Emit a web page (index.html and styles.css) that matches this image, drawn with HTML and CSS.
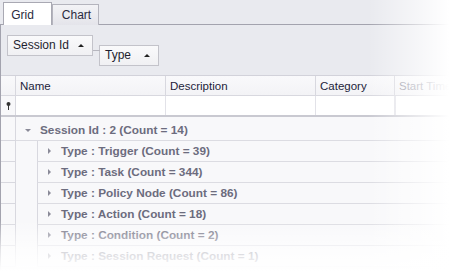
FILE: index.html
```html
<!DOCTYPE html>
<html>
<head>
<meta charset="utf-8">
<link rel="stylesheet" href="styles.css">
</head>
<body>
<div class="app">
  <div class="tabs">
    <div class="tab active">Grid</div>
    <div class="tab">Chart</div>
  </div>
  <div class="panel">
    <div class="group-panel">
      <div class="gbox gbox-session">Session Id <span class="sort"></span></div>
      <div class="gbox gbox-type">Type <span class="sort"></span></div>
    </div>
    <div class="grid">
      <div class="hrow">
        <div class="ind"></div>
        <div class="hcell c-name">Name</div>
        <div class="hcell c-desc">Description</div>
        <div class="hcell c-cat">Category</div>
        <div class="hcell c-start">Start Time</div>
      </div>
      <div class="frow">
        <div class="ind">
          <svg width="5" height="8" viewBox="0 0 5 8"><circle cx="2.5" cy="2" r="2" fill="#333"/><rect x="2" y="3" width="1" height="5" fill="#333"/></svg>
        </div>
        <div class="fcell c-name"></div>
        <div class="fcell c-desc"></div>
        <div class="fcell c-cat"></div>
        <div class="fcell c-start"></div>
      </div>
      <div class="groups">
        <div class="ind-col">
          <div class="ind-cell"></div><div class="ind-cell"></div><div class="ind-cell"></div><div class="ind-cell"></div><div class="ind-cell"></div><div class="ind-cell"></div><div class="ind-cell"></div>
        </div>
        <div class="gcontent">
          <div class="grow session"><span class="arrow-down"></span>Session Id : 2 (Count = 14)</div>
          <div class="children">
            <div class="grow"><span class="arrow-right"></span>Type : Trigger (Count = 39)</div>
            <div class="grow"><span class="arrow-right"></span>Type : Task (Count = 344)</div>
            <div class="grow"><span class="arrow-right"></span>Type : Policy Node (Count = 86)</div>
            <div class="grow"><span class="arrow-right"></span>Type : Action (Count = 18)</div>
            <div class="grow"><span class="arrow-right"></span>Type : Condition (Count = 2)</div>
            <div class="grow"><span class="arrow-right"></span>Type : Session Request (Count = 1)</div>
          </div>
        </div>
      </div>
    </div>
  </div>
  <div class="fade"></div>
</div>
</body>
</html>
```

FILE: styles.css
```css
* { box-sizing: border-box; }
html, body { margin: 0; padding: 0; background: #fff; }
.app {
  position: relative;
  width: 449px;
  height: 271px;
  overflow: hidden;
  font-family: "Liberation Sans", Arial, sans-serif;
  font-size: 11px;
}
.tabs {
  display: flex;
  align-items: flex-start;
  height: 25px;
  padding-left: 3px;
  background: #e9eaef;
  border-bottom: 1px solid #a3a3ae;
}
.tab {
  margin-top: 4px;
  height: 21px;
  width: 47px;
  padding-top: 3px;
  text-align: center;
  color: #2a2a3e;
  font-size: 12px;
  background: linear-gradient(#f3f3f6, #e4e4ea);
  border: 1px solid #b4b4bd;
  border-bottom: none;
  padding-left: 2px;
}
.tab.active {
  margin-top: 2px;
  height: 23px;
  width: 49px;
  padding-top: 5px;
  background: #fff;
  border-color: #a9a9b3;
  position: relative;
  z-index: 1;
  margin-bottom: -1px;
  padding-right: 12px;
}
.panel {
  background: #e9eaef;
  border-left: 1px solid #a3a3ae;
  height: 246px;
}
.group-panel {
  position: relative;
  height: 50px;
  display: flex;
  align-items: flex-start;
  padding-left: 6px;
  padding-top: 10px;
}
.gbox {
  display: flex;
  align-items: center;
  justify-content: space-between;
  height: 21px;
  padding: 0 8px 1px 5px;
  background: linear-gradient(#fafafb, #f0f0f3);
  border: 1px solid #c3c3ca;
  color: #1f1f30;
  font-size: 12px;
}
.gbox-session { width: 86px; position: relative; z-index: 1; }
.gbox-type { width: 60px; margin-left: 6px; margin-top: 10px; position: relative; }
.gbox-type::before {
  content: "";
  position: absolute;
  left: -50px;
  top: -1px;
  width: 49px;
  height: 5px;
  border-left: 1px solid #b6b6be;
  border-bottom: 1px solid #b6b6be;
}
.sort {
  width: 0; height: 0;
  border-left: 3px solid transparent;
  border-right: 3px solid transparent;
  border-bottom: 3px solid #222;
}
.grid { background: #f8f8fa; }
.hrow {
  display: flex;
  height: 21px;
  border-top: 1px solid #d2d2da;
  background: linear-gradient(#f9f9fb, #f3f3f6);
  border-bottom: 1px solid #d8d8df;
}
.ind {
  width: 15px;
  flex: none;
  border-right: 1px solid #d8d8df;
  display: flex;
  align-items: center;
  justify-content: center;
}
.hcell {
  flex: none;
  padding-left: 4px;
  padding-top: 4px;
  color: #1d1d3a;
  font-size: 11.5px;
  border-right: 1px solid #d8d8df;
  white-space: nowrap;
}
.c-name { width: 150px; }
.c-desc { width: 150px; }
.c-cat { width: 79px; }
.c-start { flex: 1; border-right: none; }
.hcell.c-start { color: #8e8e9e; }
.frow {
  display: flex;
  height: 21px;
  background: #fff;
  border-bottom: 2px solid #c9c9d1;
}
.frow .ind { background: #f8f8fa; padding-top: 1px; }
.fcell { flex: none; border-right: 1px solid #e2e2e8; }
.groups { display: flex; padding-top: 3px; }
.ind-col {
  width: 15px;
  flex: none;
  border-right: 1px solid #d8d8df;
  margin-top: -3px;
}
.ind-cell { height: 21px; border-bottom: 1px solid #d8d8df; }
.ind-cell:first-child { height: 24px; }
.gcontent { flex: 1; }
.grow {
  height: 21px;
  display: flex;
  align-items: center;
  padding-left: 10px;
  border-bottom: 1px solid #dcdce2;
  color: #6c6c7e;
  font-weight: bold;
  font-size: 11.8px;
  white-space: nowrap;
}
.grow.session { padding-left: 9px; }
.children { padding-left: 21px; }
.children .grow { border-left: 1px solid #d8d8df; }
.arrow-down {
  width: 0; height: 0;
  margin-right: 9px;
  border-left: 3px solid transparent;
  border-right: 3px solid transparent;
  border-top: 3px solid #8a8a98;
}
.arrow-right {
  width: 0; height: 0;
  margin-right: 10px;
  border-top: 3px solid transparent;
  border-bottom: 3px solid transparent;
  border-left: 3px solid #8a8a98;
}
.fade {
  position: absolute;
  inset: 0;
  pointer-events: none;
  background:
    linear-gradient(to bottom, rgba(255,255,255,0) 81%, rgba(255,255,255,0.7) 92%, #fff 100%),
    linear-gradient(to right, rgba(255,255,255,0) 82%, rgba(255,255,255,0.65) 94%, #fff 100%);
}
```
